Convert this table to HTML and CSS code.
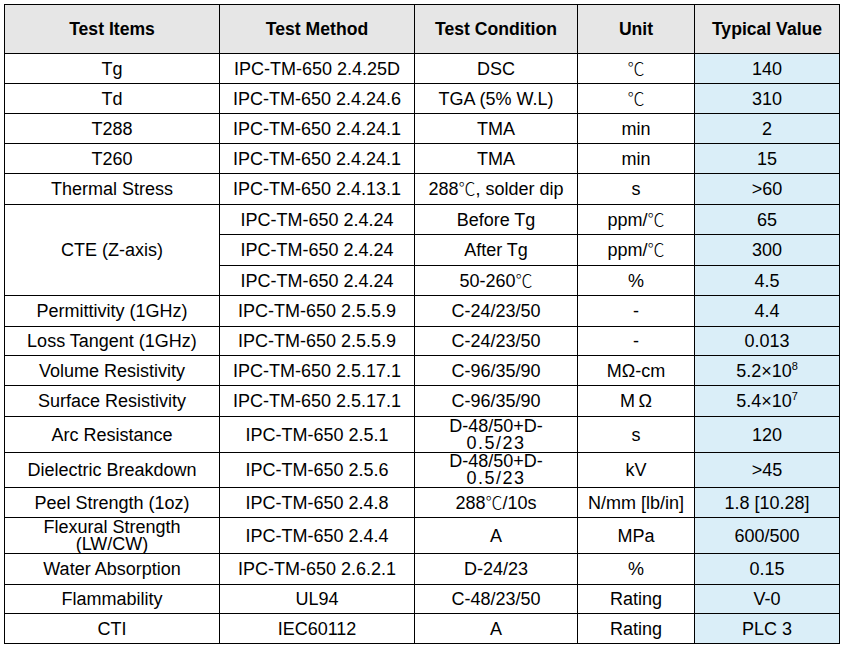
FILE: index.html
```html
<!DOCTYPE html>
<html lang="en">
<head>
<meta charset="utf-8">
<title>Test Items</title>
<link rel="stylesheet" href="styles.css">
</head>
<body>
<table class="spec">
  <colgroup>
    <col class="c-item">
    <col class="c-method">
    <col class="c-cond">
    <col class="c-unit">
    <col class="c-value">
  </colgroup>
  <thead>
    <tr class="rh">
      <th>Test Items</th>
      <th>Test Method</th>
      <th>Test Condition</th>
      <th>Unit</th>
      <th class="v">Typical Value</th>
    </tr>
  </thead>
  <tbody>
    <tr class="r30"><td>Tg</td><td>IPC-TM-650 2.4.25D</td><td>DSC</td><td><span class="deg">℃</span></td><td class="v">140</td></tr>
    <tr class="r30"><td>Td</td><td>IPC-TM-650 2.4.24.6</td><td>TGA (5% W.L)</td><td><span class="deg">℃</span></td><td class="v">310</td></tr>
    <tr class="r30"><td>T288</td><td>IPC-TM-650 2.4.24.1</td><td>TMA</td><td>min</td><td class="v">2</td></tr>
    <tr class="r30"><td>T260</td><td>IPC-TM-650 2.4.24.1</td><td>TMA</td><td>min</td><td class="v">15</td></tr>
    <tr class="r31"><td>Thermal Stress</td><td>IPC-TM-650 2.4.13.1</td><td>288<span class="deg">℃</span>, solder dip</td><td>s</td><td class="v">&gt;60</td></tr>
    <tr class="r30"><td rowspan="3">CTE (Z-axis)</td><td>IPC-TM-650 2.4.24</td><td>Before Tg</td><td>ppm/<span class="deg">℃</span></td><td class="v">65</td></tr>
    <tr class="r31"><td>IPC-TM-650 2.4.24</td><td>After Tg</td><td>ppm/<span class="deg">℃</span></td><td class="v">300</td></tr>
    <tr class="r30"><td>IPC-TM-650 2.4.24</td><td>50-260<span class="deg">℃</span></td><td>%</td><td class="v">4.5</td></tr>
    <tr class="r31"><td>Permittivity (1GHz)</td><td>IPC-TM-650 2.5.5.9</td><td>C-24/23/50</td><td>-</td><td class="v">4.4</td></tr>
    <tr class="r29"><td>Loss Tangent (1GHz)</td><td>IPC-TM-650 2.5.5.9</td><td>C-24/23/50</td><td>-</td><td class="v">0.013</td></tr>
    <tr class="r30"><td>Volume Resistivity</td><td>IPC-TM-650 2.5.17.1</td><td>C-96/35/90</td><td>MΩ-cm</td><td class="v">5.2×10<sup>8</sup></td></tr>
    <tr class="r31"><td>Surface Resistivity</td><td>IPC-TM-650 2.5.17.1</td><td>C-96/35/90</td><td>M&#8201;Ω</td><td class="v">5.4×10<sup>7</sup></td></tr>
    <tr class="r36"><td>Arc Resistance</td><td>IPC-TM-650 2.5.1</td><td class="tight">D-48/50+D-<br><span class="spread">0.5/23</span></td><td>s</td><td class="v">120</td></tr>
    <tr class="r35"><td>Dielectric Breakdown</td><td>IPC-TM-650 2.5.6</td><td class="tight">D-48/50+D-<br><span class="spread">0.5/23</span></td><td>kV</td><td class="v">&gt;45</td></tr>
    <tr class="r30"><td>Peel Strength (1oz)</td><td>IPC-TM-650 2.4.8</td><td>288<span class="deg">℃</span>/10s</td><td>N/mm [lb/in]</td><td class="v">1.8 [10.28]</td></tr>
    <tr class="r36"><td class="tight">Flexural Strength<br>(LW/CW)</td><td>IPC-TM-650 2.4.4</td><td>A</td><td>MPa</td><td class="v">600/500</td></tr>
    <tr class="r31"><td>Water Absorption</td><td>IPC-TM-650 2.6.2.1</td><td>D-24/23</td><td>%</td><td class="v">0.15</td></tr>
    <tr class="r29"><td>Flammability</td><td>UL94</td><td>C-48/23/50</td><td>Rating</td><td class="v">V-0</td></tr>
    <tr class="r30"><td>CTI</td><td>IEC60112</td><td>A</td><td>Rating</td><td class="v">PLC 3</td></tr>
  </tbody>
</table>
</body>
</html>
```

FILE: styles.css
```css
html, body {
  margin: 0;
  padding: 0;
  background: #ffffff;
}

body {
  padding: 4px 0 0 4px;
  font-family: "Liberation Sans", Arial, sans-serif;
  color: #000000;
}

.spec {
  border-collapse: collapse;
  table-layout: fixed;
  width: 835px;
  font-size: 18px;
}

.c-item { width: 215px; }
.c-method { width: 195px; }
.c-cond { width: 163px; }
.c-unit { width: 117px; }
.c-value { width: 145px; }

.spec th,
.spec td {
  border: 1px solid #000000;
  padding: 0 2px;
  text-align: center;
  vertical-align: middle;
  line-height: 20px;
  white-space: nowrap;
  overflow: hidden;
}

.spec th {
  background: #e6e6e6;
  font-weight: bold;
  font-size: 17.6px;
}

.spec td.v {
  background: #daeef8;
}

.spec th.v {
  background: #e6e6e6;
}

.rh { height: 49px; }
.r29 { height: 29px; }
.r30 { height: 30px; }
.r31 { height: 31px; }
.r35 { height: 35px; }
.r36 { height: 36px; }

.spec td.tight {
  line-height: 17px;
}

.spread {
  letter-spacing: 1.5px;
}

.deg {
  font-family: "Noto Sans CJK SC", "DejaVu Serif", serif;
  font-size: 17px;
  font-weight: 300;
  line-height: 1;
}

sup {
  font-size: 11px;
  line-height: 0;
  vertical-align: 7px;
}
```
